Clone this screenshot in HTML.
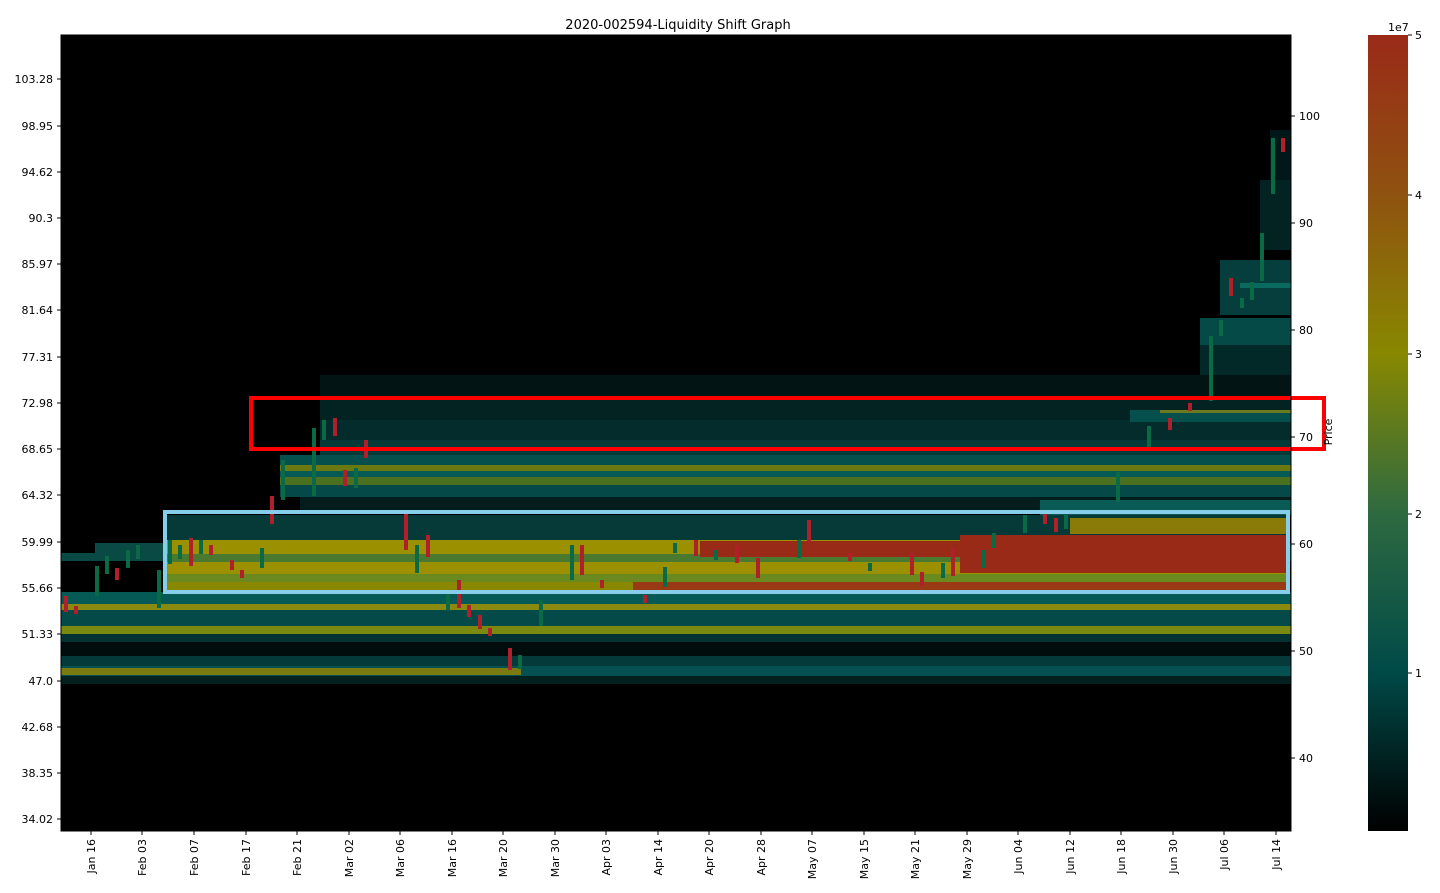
<!DOCTYPE html>
<html><head><meta charset="utf-8"><style>
body{margin:0;background:#fff;width:1440px;height:889px;overflow:hidden;font-family:"DejaVu Sans","Liberation Sans",sans-serif}
</style></head><body>
<svg width="1440" height="889" xmlns="http://www.w3.org/2000/svg" font-family="DejaVu Sans, Liberation Sans, sans-serif">
<defs>
<linearGradient id="cb" x1="0" y1="0" x2="0" y2="1">
<stop offset="0" stop-color="#9a2a18"/><stop offset="0.2" stop-color="#8f5210"/><stop offset="0.4" stop-color="#888800"/><stop offset="0.6" stop-color="#2e6a40"/><stop offset="0.8" stop-color="#004a48"/><stop offset="1" stop-color="#000"/>
</linearGradient>
</defs>
<text x="678" y="29" font-size="13" text-anchor="middle">2020-002594-Liquidity Shift Graph</text>
<rect x="61" y="35" width="1230" height="796" fill="#000"/>
<g>
<rect x="320" y="375" width="971" height="25" fill="#021414"/>
<rect x="320" y="400" width="971" height="20" fill="#032222"/>
<rect x="320" y="420" width="971" height="20" fill="#042c2c"/>
<rect x="320" y="440" width="971" height="15" fill="#053a38"/>
<rect x="280" y="455" width="1011" height="10" fill="#05504c"/>
<rect x="280" y="465" width="1011" height="6" fill="#6a7a10"/>
<rect x="280" y="471" width="1011" height="6" fill="#055a55"/>
<rect x="280" y="477" width="1011" height="8" fill="#4a7020"/>
<rect x="280" y="485" width="1011" height="12" fill="#054a48"/>
<rect x="300" y="497" width="991" height="14" fill="#031c1c"/>
<rect x="95" y="543" width="1196" height="10" fill="#0a4a44"/>
<rect x="61" y="553" width="1230" height="8" fill="#0a4a44"/>
<rect x="165" y="515" width="1124" height="25" fill="#053a38"/>
<rect x="165" y="540" width="1124" height="14" fill="#9a9000"/>
<rect x="165" y="554" width="1124" height="8" fill="#4a7a30"/>
<rect x="165" y="562" width="1124" height="12" fill="#9a9000"/>
<rect x="165" y="574" width="1124" height="8" fill="#6a8a20"/>
<rect x="165" y="582" width="1124" height="10" fill="#8a8800"/>
<rect x="700" y="541" width="589" height="16" fill="#9a2a18"/>
<rect x="960" y="535" width="329" height="38" fill="#9a2a18"/>
<rect x="633" y="582" width="656" height="8" fill="#9a3a14"/>
<rect x="1070" y="518" width="219" height="16" fill="#8a7a08"/>
<rect x="1040" y="500" width="251" height="15" fill="#0a5a55"/>
<rect x="61" y="592" width="1230" height="12" fill="#055a55"/>
<rect x="61" y="604" width="1230" height="6" fill="#8a8a10"/>
<rect x="61" y="610" width="1230" height="16" fill="#044a48"/>
<rect x="61" y="626" width="1230" height="8" fill="#7a8a10"/>
<rect x="61" y="634" width="1230" height="8" fill="#033232"/>
<rect x="61" y="642" width="1230" height="14" fill="#010c0c"/>
<rect x="61" y="656" width="1230" height="10" fill="#043a3a"/>
<rect x="61" y="666" width="1230" height="10" fill="#055050"/>
<rect x="61" y="668" width="460" height="7" fill="#7a7a10"/>
<rect x="61" y="676" width="1230" height="8" fill="#022020"/>
<rect x="1200" y="345" width="91" height="30" fill="#032828"/>
<rect x="1200" y="318" width="91" height="27" fill="#064a48"/>
<rect x="1220" y="260" width="71" height="55" fill="#053e3c"/>
<rect x="1240" y="283" width="51" height="5" fill="#0a6a60"/>
<rect x="1260" y="180" width="31" height="70" fill="#032222"/>
<rect x="1270" y="130" width="21" height="50" fill="#021818"/>
<rect x="1130" y="410" width="161" height="12" fill="#05504c"/>
<rect x="1160" y="410" width="131" height="3" fill="#6a7a20"/>
</g>
<g>
<g fill="#b0202a"><rect x="64" y="596" width="4" height="16"/><rect x="74" y="606" width="4" height="8"/><rect x="115" y="568" width="4" height="12"/><rect x="189" y="538" width="4" height="28"/><rect x="209" y="545" width="4" height="10"/><rect x="230" y="560" width="4" height="10"/><rect x="240" y="570" width="4" height="8"/><rect x="270" y="496" width="4" height="28"/><rect x="333" y="418" width="4" height="18"/><rect x="343" y="470" width="4" height="16"/><rect x="364" y="440" width="4" height="18"/><rect x="404" y="514" width="4" height="36"/><rect x="426" y="535" width="4" height="22"/><rect x="457" y="580" width="4" height="28"/><rect x="467" y="605" width="4" height="12"/><rect x="478" y="615" width="4" height="14"/><rect x="488" y="628" width="4" height="8"/><rect x="508" y="648" width="4" height="22"/><rect x="580" y="545" width="4" height="30"/><rect x="600" y="580" width="4" height="8"/><rect x="643" y="595" width="4" height="8"/><rect x="694" y="540" width="4" height="16"/><rect x="735" y="545" width="4" height="18"/><rect x="756" y="558" width="4" height="20"/><rect x="807" y="520" width="4" height="22"/><rect x="848" y="553" width="4" height="8"/><rect x="910" y="553" width="4" height="22"/><rect x="920" y="572" width="4" height="14"/><rect x="951" y="548" width="4" height="28"/><rect x="1043" y="512" width="4" height="12"/><rect x="1054" y="518" width="4" height="14"/><rect x="1168" y="418" width="4" height="12"/><rect x="1188" y="403" width="4" height="8"/><rect x="1229" y="278" width="4" height="18"/><rect x="1281" y="138" width="4" height="14"/></g>
<g fill="#0a6a45"><rect x="95" y="566" width="4" height="30"/><rect x="105" y="556" width="4" height="18"/><rect x="126" y="550" width="4" height="18"/><rect x="136" y="545" width="4" height="14"/><rect x="157" y="570" width="4" height="38"/><rect x="168" y="540" width="4" height="24"/><rect x="178" y="545" width="4" height="14"/><rect x="199" y="540" width="4" height="14"/><rect x="260" y="548" width="4" height="20"/><rect x="281" y="460" width="4" height="40"/><rect x="312" y="428" width="4" height="68"/><rect x="322" y="420" width="4" height="20"/><rect x="354" y="468" width="4" height="20"/><rect x="415" y="545" width="4" height="28"/><rect x="446" y="590" width="4" height="20"/><rect x="518" y="655" width="4" height="14"/><rect x="539" y="600" width="4" height="26"/><rect x="570" y="545" width="4" height="35"/><rect x="663" y="567" width="4" height="20"/><rect x="673" y="543" width="4" height="10"/><rect x="714" y="550" width="4" height="10"/><rect x="797" y="540" width="4" height="18"/><rect x="868" y="563" width="4" height="8"/><rect x="941" y="563" width="4" height="15"/><rect x="982" y="550" width="4" height="18"/><rect x="992" y="533" width="4" height="15"/><rect x="1023" y="515" width="4" height="18"/><rect x="1064" y="515" width="4" height="14"/><rect x="1116" y="472" width="4" height="30"/><rect x="1147" y="426" width="4" height="22"/><rect x="1209" y="336" width="4" height="65"/><rect x="1219" y="320" width="4" height="16"/><rect x="1240" y="298" width="4" height="10"/><rect x="1250" y="282" width="4" height="18"/><rect x="1260" y="233" width="4" height="48"/><rect x="1271" y="138" width="4" height="56"/></g>
</g>
<rect x="251" y="398" width="1073" height="51" fill="none" stroke="#ff0000" stroke-width="4"/>
<rect x="165" y="512" width="1123" height="80" fill="none" stroke="#87ceeb" stroke-width="4"/>
<rect x="61" y="35" width="1230" height="796" fill="none" stroke="#000" stroke-width="1"/>
<g font-size="11" text-anchor="end">
<text x="53" y="83">103.28</text><text x="53" y="130">98.95</text><text x="53" y="176">94.62</text><text x="53" y="222">90.3</text><text x="53" y="268">85.97</text><text x="53" y="314">81.64</text><text x="53" y="361">77.31</text><text x="53" y="407">72.98</text><text x="53" y="453">68.65</text><text x="53" y="499">64.32</text><text x="53" y="546">59.99</text><text x="53" y="592">55.66</text><text x="53" y="638">51.33</text><text x="53" y="685">47.0</text><text x="53" y="731">42.68</text><text x="53" y="777">38.35</text><text x="53" y="823">34.02</text>
</g>
<g stroke="#000"><path d="M57 79h4M57 126h4M57 172h4M57 218h4M57 264h4M57 310h4M57 357h4M57 403h4M57 449h4M57 495h4M57 542h4M57 588h4M57 634h4M57 681h4M57 727h4M57 773h4M57 819h4"/>
<path d="M1291 116h4M1291 223h4M1291 330h4M1291 437h4M1291 544h4M1291 651h4M1291 758h4"/>
<path d="M91 831v4M142 831v4M194 831v4M246 831v4M297 831v4M349 831v4M400 831v4M452 831v4M503 831v4M555 831v4M606 831v4M658 831v4M709 831v4M761 831v4M812 831v4M864 831v4M915 831v4M967 831v4M1018 831v4M1070 831v4M1121 831v4M1173 831v4M1224 831v4M1276 831v4"/>
<path d="M1408 35h4M1408 195h4M1408 354h4M1408 514h4M1408 673h4"/></g>
<g font-size="11"><text x="1299" y="120">100</text><text x="1299" y="227">90</text><text x="1299" y="334">80</text><text x="1299" y="441">70</text><text x="1299" y="548">60</text><text x="1299" y="655">50</text><text x="1299" y="762">40</text></g>
<text transform="translate(1332,432) rotate(-90)" font-size="11" text-anchor="middle">Price</text>
<g font-size="11" text-anchor="end">
<text transform="translate(95,839) rotate(-90)">Jan 16</text><text transform="translate(146,839) rotate(-90)">Feb 03</text><text transform="translate(198,839) rotate(-90)">Feb 07</text><text transform="translate(250,839) rotate(-90)">Feb 17</text><text transform="translate(301,839) rotate(-90)">Feb 21</text><text transform="translate(353,839) rotate(-90)">Mar 02</text><text transform="translate(404,839) rotate(-90)">Mar 06</text><text transform="translate(456,839) rotate(-90)">Mar 16</text><text transform="translate(507,839) rotate(-90)">Mar 20</text><text transform="translate(559,839) rotate(-90)">Mar 30</text><text transform="translate(610,839) rotate(-90)">Apr 03</text><text transform="translate(662,839) rotate(-90)">Apr 14</text><text transform="translate(713,839) rotate(-90)">Apr 20</text><text transform="translate(765,839) rotate(-90)">Apr 28</text><text transform="translate(816,839) rotate(-90)">May 07</text><text transform="translate(868,839) rotate(-90)">May 15</text><text transform="translate(919,839) rotate(-90)">May 21</text><text transform="translate(971,839) rotate(-90)">May 29</text><text transform="translate(1022,839) rotate(-90)">Jun 04</text><text transform="translate(1074,839) rotate(-90)">Jun 12</text><text transform="translate(1125,839) rotate(-90)">Jun 18</text><text transform="translate(1177,839) rotate(-90)">Jun 30</text><text transform="translate(1228,839) rotate(-90)">Jul 06</text><text transform="translate(1280,839) rotate(-90)">Jul 14</text>
</g>
<rect x="1368" y="35" width="40" height="796" fill="url(#cb)"/>
<g font-size="11"><text x="1388" y="31">1e7</text><text x="1415" y="39">5</text><text x="1415" y="199">4</text><text x="1415" y="358">3</text><text x="1415" y="518">2</text><text x="1415" y="677">1</text></g>
</svg>
</body></html>
